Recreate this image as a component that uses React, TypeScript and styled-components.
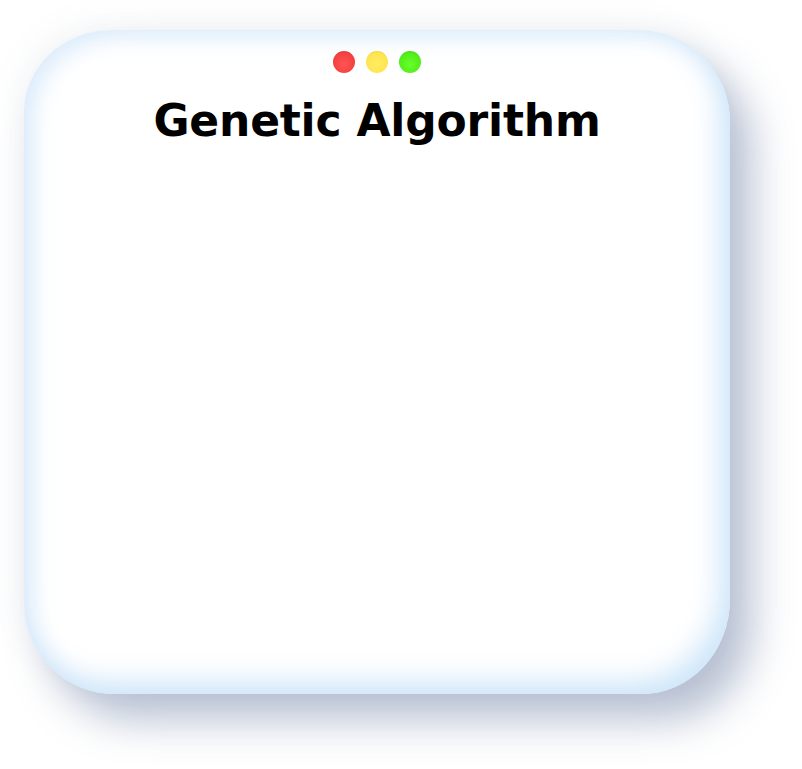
import styled, { createGlobalStyle } from 'styled-components';

const GlobalStyle = createGlobalStyle`
  html, body {
    margin: 0;
    padding: 0;
    background: #ffffff;
  }
  body {
    font-family: Inter, 'Liberation Sans', sans-serif;
  }
`;

const dots = [
  { light: '#ff5555', base: '#f43f3f', dark: '#c62c2c' },
  { light: '#ffec62', base: '#fde54f', dark: '#cfae2a' },
  { light: '#66ff2a', base: '#52ec18', dark: '#38b20c' }
];

const App = () => {
  return (
    <>
      <GlobalStyle />
      <StyledPage>
        <StyledCard>
          <StyledDots>
            {dots.map((d) => (
              <StyledDot key={d.base} $light={d.light} $base={d.base} $dark={d.dark} />
            ))}
          </StyledDots>
          <StyledTitle>Genetic Algorithm</StyledTitle>
        </StyledCard>
      </StyledPage>
    </>
  );
};

export default App;

const StyledPage = styled.div`
  width: 802px;
  height: 769px;
  padding: 30px 0 0 24px;
  box-sizing: border-box;
  overflow: hidden;
`;

const StyledCard = styled.div`
  width: 706px;
  height: 664px;
  box-sizing: border-box;
  display: flex;
  flex-direction: column;
  align-items: center;
  padding-top: 21px;
  background: #ffffff;
  border-radius: 88px 92px 88px 90px / 82px 92px 95px 92px;
  box-shadow:
    inset -10px -12px 28px rgba(200, 226, 248, 0.9),
    inset 10px 8px 22px rgba(222, 237, 252, 0.9),
    22px 26px 42px rgba(95, 115, 155, 0.45),
    -8px -10px 30px rgba(120, 130, 150, 0.06);
`;

const StyledDots = styled.div`
  display: flex;
  gap: 11px;
`;

const StyledDot = styled.span<{ $light: string; $base: string; $dark: string }>`
  width: 22px;
  height: 22px;
  border-radius: 50%;
  background: radial-gradient(
    circle at 50% 60%,
    ${(p) => p.$light} 0%,
    ${(p) => p.$base} 65%,
    ${(p) => p.$dark} 100%
  );
`;

const StyledTitle = styled.h1`
  margin: 21px 0 0;
  font-family: 'DejaVu Sans', Inter, sans-serif;
  font-size: 44px;
  font-weight: 700;
  line-height: 54px;
  letter-spacing: -0.2px;
  color: #000000;
`;
